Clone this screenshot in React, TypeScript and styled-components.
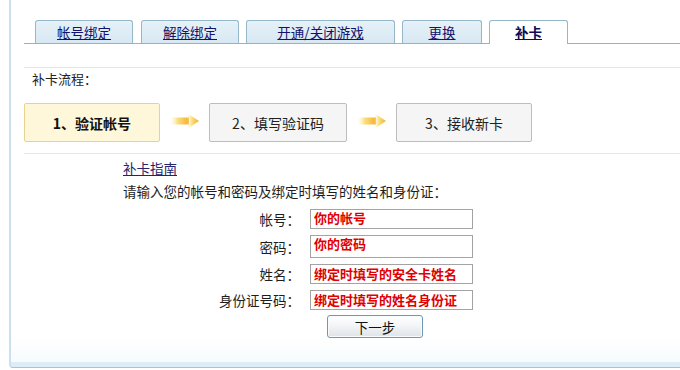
import React from "react";
import styled, { createGlobalStyle, css } from "styled-components";

const GlobalStyle = createGlobalStyle`
  html, body { margin: 0; padding: 0; background: #ffffff; }
  body {
    font-family: "Noto Sans CJK SC", "Liberation Sans", sans-serif;
    font-size: 13.5px;
    color: #1e1e1e;
    overflow: hidden;
  }
`;

const Panel = styled.div`
  box-sizing: border-box;
  margin-left: 9px;
  height: 368px;
  padding-top: 20px;
  padding-left: 13px;
  border-left: 2px solid #cae0ef;
  border-bottom: 1px solid #9ec6dc;
  border-bottom-left-radius: 4px;
  background: linear-gradient(to bottom, #ffffff 0%, #ffffff 92%, #f6fbfd 98.5%, #dcedf7 98.6%, #dcedf7 100%);
`;

const TabBar = styled.div`
  display: flex;
  align-items: flex-end;
  gap: 7px;
  height: 23px;
  padding-left: 11px;
  border-bottom: 1px solid #8fb3c7;
`;

const Tab = styled.a<{ $w: number; $active?: boolean; $gap?: number }>`
  box-sizing: border-box;
  width: ${(p) => p.$w}px;
  height: 23px;
  margin-right: ${(p) => p.$gap ?? 0}px;
  border: 1px solid #95b7ca;
  border-bottom: none;
  border-radius: 3px 3px 0 0;
  background: linear-gradient(to bottom, #e6f1f8, #d8e8f3);
  color: #12126c;
  text-decoration: underline;
  text-align: center;
  font-size: 13.5px;
  line-height: 22px;
  cursor: pointer;
  ${(p) =>
    p.$active &&
    css`
      height: 24px;
      margin-bottom: -1px;
      background: #ffffff;
      font-weight: bold;
      color: #0c0c5a;
    `}
`;

const Divider = styled.div<{ $top: number }>`
  height: 1px;
  margin-top: ${(p) => p.$top}px;
  background: #e6e6e6;
`;

const FlowTitle = styled.div`
  margin-top: 1px;
  padding-left: 8px;
  height: 20px;
  line-height: 20px;
  font-size: 13px;
  color: #222;
`;

const Steps = styled.div`
  display: flex;
  align-items: center;
  margin-top: 14px;
  height: 39px;
`;

const Step = styled.div<{ $w: number; $active?: boolean }>`
  box-sizing: border-box;
  width: ${(p) => p.$w}px;
  height: 39px;
  display: flex;
  align-items: center;
  justify-content: center;
  border: 1px solid #bdbdbd;
  border-radius: 2px;
  background: #f5f5f5;
  font-size: 14px;
  color: #222;
  ${(p) =>
    p.$active &&
    css`
      border-color: #e6d38e;
      background: #fef7da;
      font-weight: bold;
      color: #111;
    `}
`;

const ArrowWrap = styled.div`
  display: flex;
  align-items: center;
  margin: -3px 9px 0 10px;
  width: 30px;
  height: 18px;
`;

const Guide = styled.div`
  padding-left: 99px;
`;

const GuideLink = styled.a`
  display: inline-block;
  margin-top: 4px;
  height: 20px;
  line-height: 20px;
  font-size: 13.5px;
  color: #24246e;
  text-decoration: underline;
  cursor: pointer;
`;

const Intro = styled.div`
  margin-top: 3px;
  height: 20px;
  line-height: 20px;
  font-size: 13.5px;
  color: #1e1e1e;
`;

const Form = styled.div`
  display: grid;
  grid-template-columns: 177px 163px;
  column-gap: 10px;
  row-gap: 6px;
  align-items: center;
  margin-top: 8px;
`;

const Label = styled.label`
  text-align: right;
  font-size: 13.5px;
  color: #1e1e1e;
  white-space: nowrap;
`;

const Field = styled.input<{ $h: number; $pb: number }>`
  box-sizing: border-box;
  width: 163px;
  height: ${(p) => p.$h}px;
  margin: 0;
  padding: 0 3px ${(p) => p.$pb}px 3px;
  border: 1px solid #a3a3a3;
  border-radius: 0;
  background: #ffffff;
  color: #e00000;
  font-family: "Noto Sans CJK SC", "Liberation Sans", sans-serif;
  font-size: 13px;
  font-weight: bold;
  outline: none;
`;

const NextButton = styled.button`
  grid-column: 2;
  justify-self: start;
  margin-left: 17px;
  margin-top: -1px;
  box-sizing: border-box;
  width: 96px;
  height: 23px;
  padding: 0;
  border: 1px solid #6d9ab3;
  border-radius: 3px;
  background: linear-gradient(to bottom, #ffffff 0%, #f3f5f7 45%, #dfe4e8 100%);
  box-shadow: inset 0 0 0 1px #f8fbfd;
  font-family: "Noto Sans CJK SC", "Liberation Sans", sans-serif;
  font-size: 13.5px;
  color: #111;
  cursor: pointer;
`;

const Arrow: React.FC<{ id: string }> = ({ id }) => (
  <svg width="30" height="18" viewBox="0 0 30 18">
    <defs>
      <linearGradient id={id} x1="0" y1="0" x2="1" y2="0">
        <stop offset="0" stopColor="#fff6d0" stopOpacity="0" />
        <stop offset="0.4" stopColor="#fcdf80" />
        <stop offset="1" stopColor="#f4b02a" />
      </linearGradient>
    </defs>
    <rect x="0" y="5.5" width="19" height="7" fill={`url(#${id})`} />
    <polygon points="17,1 29,9 17,17" fill={`url(#${id})`} />
  </svg>
);

const tabs = [
  { label: "帐号绑定", w: 98, gap: 1 },
  { label: "解除绑定", w: 98 },
  { label: "开通/关闭游戏", w: 149 },
  { label: "更换", w: 80 },
  { label: "补卡", w: 79, active: true },
];

const fields = [
  { label: "帐号：", value: "你的帐号", h: 20, pb: 3 },
  { label: "密码：", value: "你的密码", h: 23, pb: 7 },
  { label: "姓名：", value: "绑定时填写的安全卡姓名", h: 20, pb: 1 },
  { label: "身份证号码：", value: "绑定时填写的姓名身份证", h: 20, pb: 1 },
];

export default function App() {
  return (
    <>
      <GlobalStyle />
      <Panel>
        <TabBar>
          {tabs.map((t) => (
            <Tab key={t.label} $w={t.w} $active={t.active} $gap={t.gap}>
              {t.label}
            </Tab>
          ))}
        </TabBar>
        <Divider $top={23} />
        <FlowTitle>补卡流程：</FlowTitle>
        <Steps>
          <Step $w={136} $active>1、验证帐号</Step>
          <ArrowWrap>
            <Arrow id="arrowA" />
          </ArrowWrap>
          <Step $w={138}>2、填写验证码</Step>
          <ArrowWrap>
            <Arrow id="arrowB" />
          </ArrowWrap>
          <Step $w={136}>3、接收新卡</Step>
        </Steps>
        <Divider $top={11} />
        <Guide>
          <GuideLink>补卡指南</GuideLink>
          <Intro>请输入您的帐号和密码及绑定时填写的姓名和身份证：</Intro>
          <Form>
            {fields.map((f) => (
              <React.Fragment key={f.label}>
                <Label>{f.label}</Label>
                <Field $h={f.h} $pb={f.pb} defaultValue={f.value} readOnly />
              </React.Fragment>
            ))}
            <NextButton>下一步</NextButton>
          </Form>
        </Guide>
      </Panel>
    </>
  );
}
